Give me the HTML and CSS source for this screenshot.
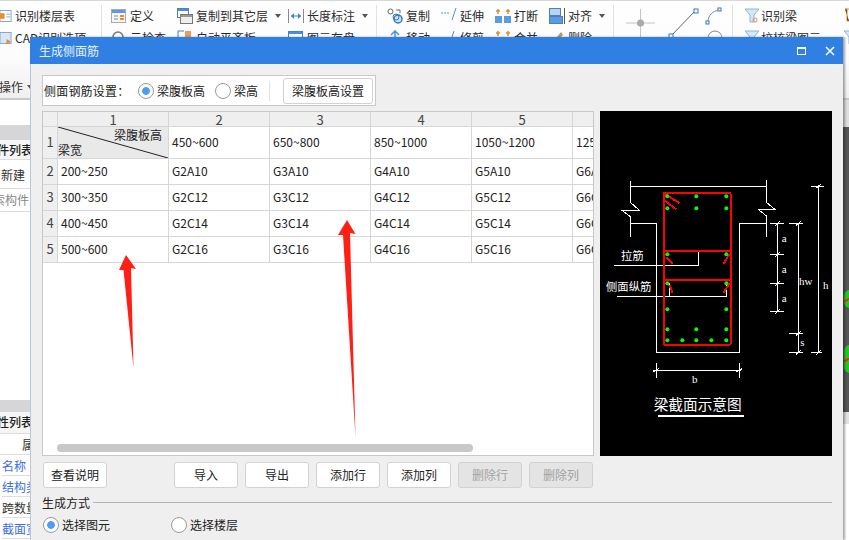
FILE: index.html
```html
<!DOCTYPE html>
<html lang="zh">
<head>
<meta charset="utf-8">
<title>生成侧面筋</title>
<link rel="stylesheet" href="styles.css">
</head>
<body>
<div class="app">
  <header class="ribbon">
    <div class="groups">
      <section class="group g1">
        <div class="tool"><svg class="ic ic-s" viewBox="0 0 13 16"><rect x="0" y="2" width="12" height="12" fill="#fff" stroke="#7aa3d8"/><rect x="0" y="5" width="5" height="6" fill="#ef8a2c"/><path d="M7 6h4M7 9h4" stroke="#7aa3d8"/></svg><span>识别楼层表</span></div>
        <div class="tool"><svg class="ic ic-s" viewBox="0 0 13 16"><rect x="0" y="2" width="12" height="12" fill="#dbe7f5" stroke="#7aa3d8"/><path d="M7 9l5 3-5 3z" fill="#ef8a2c"/></svg><span>CAD识别选项</span></div>
      </section>
      <section class="group g2">
        <div class="tool"><svg class="ic" viewBox="0 0 16 16"><rect x=".5" y="1.5" width="14" height="13" fill="#f6f6f6" stroke="#aaa"/><rect x="1" y="2" width="13" height="3" fill="#5b9be0"/><path d="M3 8h4M3 11h4" stroke="#888"/><path d="M9 8h4M9 11h4" stroke="#ef8a2c" stroke-width="2"/></svg><span>定义</span></div>
        <div class="tool"><svg class="ic" viewBox="0 0 16 16"><rect x=".5" y=".5" width="11" height="9" fill="#fff" stroke="#4a7fc0"/><rect x="1" y="1" width="10" height="2" fill="#4a90e2"/><rect x="3.500" y="6.500" width="12" height="9" fill="#eee" stroke="#777"/><rect x="4" y="7" width="11" height="2" fill="#999"/></svg><span>复制到其它层</span><i class="caret"></i></div>
        <div class="tool"><svg class="ic" viewBox="0 0 16 16"><path d="M.5 1v14M15.500 1v14" stroke="#888"/><path d="M3 8h10" stroke="#3b82d8"/><path d="M3 8l3-3v6zM13 8l-3-3v6z" fill="#3b82d8"/></svg><span>长度标注</span><i class="caret"></i></div>
        <div class="tool"><svg class="ic" viewBox="0 0 16 16"><circle cx="7" cy="7" r="5" fill="none" stroke="#777" stroke-width="1.500"/><path d="M11 11l4 4" stroke="#e58a2c" stroke-width="2"/></svg><span>云检查</span></div>
        <div class="tool"><svg class="ic" viewBox="0 0 16 16"><rect x="8" y="1" width="6" height="6" fill="#ef9a5c"/><path d="M1 1h6M1 1v14" stroke="#4a7fc0"/></svg><span>自动平齐板</span></div>
        <div class="tool"><svg class="ic" viewBox="0 0 16 16"><rect x=".5" y="1.500" width="14" height="13" fill="#fff" stroke="#4a7fc0"/><rect x="1" y="2" width="13" height="2" fill="#4a90e2"/></svg><span>图元存盘</span></div>
      </section>
      <section class="group g3">
        <div class="tool"><svg class="ic" viewBox="0 0 16 16"><circle cx="3.500" cy="3.500" r="2.500" fill="none" stroke="#666"/><circle cx="11" cy="11" r="4" fill="#cfe2f7" stroke="#2f78c8" stroke-width="1.500"/><circle cx="9" cy="9" r="3" fill="none" stroke="#2f78c8"/><path d="M9 2h4v3" fill="none" stroke="#666"/></svg><span>复制</span></div>
        <div class="tool"><svg class="ic" viewBox="0 0 16 16"><path d="M0 5h9" stroke="#4a90e2" stroke-dasharray="2 1"/><path d="M15 0L11 12" stroke="#4a90e2"/></svg><span>延伸</span></div>
        <div class="tool"><svg class="ic" viewBox="0 0 16 16"><rect x="0" y="8" width="7" height="7" fill="#5b9be0"/><rect x="9" y="8" width="7" height="7" fill="#5b9be0"/><path d="M3 1v5M1 3h4M13 1v5M11 3h4" stroke="#e58a2c" stroke-width="1.500"/></svg><span>打断</span></div>
        <div class="tool"><svg class="ic" viewBox="0 0 16 16"><rect x=".5" y=".5" width="11" height="7" fill="#b9d3f2" stroke="#4a7fc0"/><rect x=".5" y="8.500" width="13" height="7" fill="#5b9be0" stroke="#4a7fc0"/><path d="M15.500 0v16" stroke="#555"/></svg><span>对齐</span><i class="caret"></i></div>
        <div class="tool"><svg class="ic" viewBox="0 0 16 16"><path d="M8 1v12M4 5l4-4 4 4" fill="none" stroke="#4a90e2" stroke-width="1.500"/></svg><span>移动</span></div>
        <div class="tool"><svg class="ic" viewBox="0 0 16 16"><path d="M13 1L9 13" stroke="#4a90e2"/></svg><span>修剪</span></div>
        <div class="tool"><svg class="ic" viewBox="0 0 16 16"><path d="M3 1v5M1 3h4M13 1v5M11 3h4" stroke="#e58a2c" stroke-width="1.500"/></svg><span>合并</span></div>
        <div class="tool"><svg class="ic" viewBox="0 0 16 16"><path d="M3 13L12 2l2 3-8 8z" fill="#b59a5c"/></svg><span>删除</span></div>
      </section>
      <section class="group g4">
        <svg class="draw" viewBox="0 0 119 44" width="119" height="44">
          <path d="M12 18h29M26.500 4v29" stroke="#c4c4c4"/>
          <circle cx="26.500" cy="18" r="3.500" fill="#aaa"/>
          <path d="M57 31L81 6" stroke="#666"/>
          <rect x="55" y="29" width="4" height="4" fill="#fff" stroke="#2f78c8"/>
          <rect x="80" y="4" width="4" height="4" fill="#fff" stroke="#2f78c8"/>
          <path d="M94 17C94 10 99 6 105 5" fill="none" stroke="#888"/>
          <rect x="92" y="16" width="3" height="3" fill="#fff" stroke="#2f78c8"/>
          <rect x="104" y="3" width="3" height="3" fill="#fff" stroke="#2f78c8"/>
          <circle cx="101" cy="33" r="7" fill="none" stroke="#888"/>
        </svg>
      </section>
      <section class="group g5">
        <div class="tool"><svg class="ic" viewBox="0 0 16 16"><path d="M1 1h14l-5 6v7H6V7z" fill="#d5e6f5" stroke="#8db5d8"/><circle cx="11" cy="12" r="2" fill="none" stroke="#e58a6c"/></svg><span>识别梁</span></div>
        <div class="tool"><svg class="ic" viewBox="0 0 16 16"><path d="M2 1h2v12h2M2 1h13" stroke="#e58a2c"/></svg></div>
        <div class="tool"><svg class="ic" viewBox="0 0 16 16"><path d="M1 1h14l-5 6v7H6V7z" fill="#d5e6f5" stroke="#8db5d8"/></svg><span>校核梁图元</span></div>
        <div class="tool"><svg class="ic" viewBox="0 0 16 16"><path d="M1 1h14l-5 6v7H6V7z" fill="#d5e6f5" stroke="#8db5d8"/></svg></div>
      </section>
    </div>
    <div class="caption"><span>操作</span><i class="caret"></i></div>
  </header>

  <main class="workspace">
    <aside class="side">
      <div class="spacer-a"></div>
      <div class="band"></div>
      <div class="side-head">件列表</div>
      <div class="side-row tall">新建</div>
      <div class="side-row search">索构件...</div>
      <div class="spacer-b"></div>
      <div class="band short"></div>
      <div class="side-head compact">性列表</div>
      <div class="side-row attr center">属</div>
      <div class="side-row attr link">名称</div>
      <div class="side-row attr link">结构类</div>
      <div class="side-row attr">跨数量</div>
      <div class="side-row attr link">截面宽</div>
    </aside>
    <div class="stage">
      <div class="stage-top"></div>
      <div class="cad">
        <span class="blob one"></span>
        <span class="blob two"></span>
      </div>
      <div class="stage-bottom"></div>
    </div>
  </main>

  <section class="dialog">
    <div class="titlebar">
      <span class="title">生成侧面筋</span>
      <svg class="winbtn" viewBox="0 0 50 12" width="50" height="12">
        <rect x="4.500" y="2.500" width="8" height="7" fill="none" stroke="#fff" stroke-width="1"/>
        <path d="M4 3h9" stroke="#fff" stroke-width="2"/>
        <path d="M33 2l8 8M41 2l-8 8" stroke="#fff" stroke-width="1.500"/>
      </svg>
    </div>
    <div class="dialog-body">
      <div class="settings">
        <span class="settings-label">侧面钢筋设置：</span>
        <label class="radio on first">梁腹板高</label>
        <label class="radio second">梁高</label>
        <span class="vsep"></span>
        <button class="btn wide">梁腹板高设置</button>
      </div>

      <div class="middle">
        <div class="sheet">
          <table class="grid">
            <colgroup>
              <col class="c0"><col class="c1"><col class="cn"><col class="cn"><col class="cn"><col class="cn"><col class="cn">
            </colgroup>
            <tr class="r-head">
              <th class="rowno"></th><th>1</th><th>2</th><th>3</th><th>4</th><th>5</th><th></th>
            </tr>
            <tr class="r-first">
              <th class="rowno">1</th>
              <td class="diag">
                <svg class="diag-line" viewBox="0 0 110 31" preserveAspectRatio="none"><path d="M0 0L110 31" stroke="#222"/></svg>
                <span class="diag-top">梁腹板高</span>
                <span class="diag-bottom">梁宽</span>
              </td>
              <td>450~600</td><td>650~800</td><td>850~1000</td><td>1050~1200</td><td>1250~1400</td>
            </tr>
            <tr><th class="rowno">2</th><td>200~250</td><td>G2A10</td><td>G3A10</td><td>G4A10</td><td>G5A10</td><td>G6A10</td></tr>
            <tr><th class="rowno">3</th><td>300~350</td><td>G2C12</td><td>G3C12</td><td>G4C12</td><td>G5C12</td><td>G6C12</td></tr>
            <tr><th class="rowno">4</th><td>400~450</td><td>G2C14</td><td>G3C14</td><td>G4C14</td><td>G5C14</td><td>G6C14</td></tr>
            <tr><th class="rowno">5</th><td>500~600</td><td>G2C16</td><td>G3C16</td><td>G4C16</td><td>G5C16</td><td>G6C16</td></tr>
          </table>
          <div class="scrollbar"></div>
        </div>

        <svg class="section" viewBox="0 -177 696 1035" width="232" height="345">
          <rect x="0" y="-177" width="696" height="1035" fill="#000"/>
          <g class="wl">
            <path d="M91 48H499M91 33V97L118 121L67 122L91 140V202M499 30V97L526 119L476 119L499 138V202"/>
            <path d="M91 160H169V547H418V160H499"/>
            <path d="M169 580V623M418 580V623M160 601H422M160 606L176 596M410 606L426 596"/>
            <path d="M533 160V424M510 160H552M510 253H552M510 340H552M510 424H552M526 166L540 154M526 259L540 247M526 346L540 334M526 430L540 418"/>
            <path d="M595 160V547M567 160H610M567 490H610M567 547H610M588 166L602 154M588 496L602 484M588 553L602 541"/>
            <path d="M656 48V547M633 48H673M633 547H665M649 54L663 42M649 553L663 541"/>
            <path d="M42 285H295V240M52 378H380V335M208 378V340"/>
          </g>
          <g class="rd">
            <rect x="191" y="69" width="201" height="455" rx="3"/>
            <path d="M191 242H392M191 329H392"/>
            <path d="M195 72L238 99M192 90L228 118M200 262L218 282M388 252L371 282M208 345L218 368M388 340L371 368"/>
          </g>
          <g class="gn">
            <circle cx="202" cy="79" r="6"/><circle cx="289" cy="79" r="6"/><circle cx="379" cy="79" r="6"/>
            <circle cx="202" cy="115" r="6"/><circle cx="289" cy="115" r="6"/><circle cx="379" cy="115" r="6"/>
            <circle cx="202" cy="253" r="6"/><circle cx="379" cy="253" r="6"/>
            <circle cx="202" cy="340" r="6"/><circle cx="379" cy="340" r="6"/>
            <circle cx="202" cy="418" r="6"/><circle cx="379" cy="418" r="6"/>
            <circle cx="202" cy="478" r="6"/><circle cx="289" cy="478" r="6"/><circle cx="379" cy="478" r="6"/>
            <circle cx="202" cy="511" r="6"/><circle cx="247" cy="511" r="6"/><circle cx="289" cy="511" r="6"/><circle cx="334" cy="511" r="6"/><circle cx="379" cy="511" r="6"/>
          </g>
          <text class="cjk" x="63" y="270">拉筋</text>
          <text class="cjk" x="18" y="363">侧面纵筋</text>
          <text class="cjk big" x="161" y="720">梁截面示意图</text>
          <path class="under" d="M174 738H432"/>
          <text class="lat" x="545" y="216">a</text>
          <text class="lat" x="545" y="309">a</text>
          <text class="lat" x="545" y="396">a</text>
          <text class="lat" x="597" y="344">hw</text>
          <text class="lat" x="669" y="358">h</text>
          <text class="lat" x="601" y="528">s</text>
          <text class="lat" x="276" y="640">b</text>
        </svg>
      </div>

      <div class="actions">
        <button class="btn">查看说明</button>
        <div class="actions-right">
          <button class="btn">导入</button>
          <button class="btn">导出</button>
          <button class="btn">添加行</button>
          <button class="btn">添加列</button>
          <button class="btn off">删除行</button>
          <button class="btn off">删除列</button>
        </div>
      </div>

      <div class="legend"><span>生成方式</span><i></i></div>
      <div class="modes">
        <label class="radio on mode-a">选择图元</label>
        <label class="radio">选择楼层</label>
      </div>
    </div>
  </section>

  <svg class="arrows" viewBox="0 0 849 540" width="849" height="540">
    <path d="M126 255L136 269L131 268L133.500 368L123.500 270L119 270Z"/>
    <path d="M347 220L355.500 234L350 233L355.500 437L343 235L338 235Z"/>
  </svg>
</div>
</body>
</html>
```

FILE: styles.css
```css
* { box-sizing: border-box; }
html, body { margin: 0; padding: 0; }
body {
  width: 849px;
  height: 540px;
  overflow: hidden;
  background: #fff;
  color: #333;
  font: 12px/16px "Noto Sans CJK SC", "Noto Sans", sans-serif;
}
.app { position: relative; width: 849px; height: 540px; overflow: hidden; }

/* ribbon */
.ribbon {
  height: 100px;
  padding-top: 4px;
  border-top: 1px solid #d8d8d8;
  border-bottom: 2px solid #c8c8c8;
  background: linear-gradient(#fff, #fbfbfb 60%, #efefef);
  overflow: hidden;
}
.groups { display: flex; height: 75px; }
.group { display: grid; grid-auto-rows: 22px; border-right: 1px solid #e2e2e2; height: 70px; align-content: start; }
.g1 { width: 102px; grid-template-columns: 1fr; }
.g2 { width: 275px; padding-left: 9px; grid-template-columns: 66px 111px 1fr; }
.g3 { width: 237px; padding-left: 10px; grid-template-columns: 54px 54px 54px 1fr; }
.g4 { width: 119px; display: block; }
.g5 { flex: 1; padding-left: 11px; border-right: 0; grid-template-columns: 99px 1fr; }
.tool { display: flex; align-items: center; gap: 3px; white-space: nowrap; overflow: hidden; color: #2b2b2b; }
.ic { width: 16px; height: 16px; flex: none; }
.ic-s { width: 12px; }
.g5 .ic { margin-right: -2px; }
.draw { display: block; }
.caret { width: 0; height: 0; margin-left: 4px; border: 3px solid transparent; border-top: 4px solid #555; border-bottom: 0; }
.caption { display: flex; align-items: center; height: 16px; margin-top: -1px; margin-left: -1px; color: #333; }

/* background workspace */
.workspace { display: grid; grid-template-columns: 30px 1fr; height: 440px; }
.side { overflow: hidden; white-space: nowrap; }
.spacer-a { height: 25px; }
.band { height: 15px; background: #d6d6d9; }
.band.short { height: 12px; }
.spacer-b { height: 188px; }
.side-head { height: 20px; line-height: 20px; margin-left: -3px; border-bottom: 1px solid #ddd; background: #f5f5f5; font-weight: 500; color: #222; }
.side-head.compact { height: 22px; }
.side-row { height: 21px; line-height: 21px; border-bottom: 1px solid #ddd; }
.side-row.tall { height: 29px; line-height: 29px; padding-left: 1px; }
.side-row.search { height: 23px; line-height: 22px; margin-left: -7px; color: #888; }
.side-row.attr { margin-left: 2px; }
.side-row.center { padding-left: 22px; margin-left: 0; }
.side-row.link { color: #3a6ee0; }
.stage { background: #fff; }
.stage-top { height: 27px; background: #dedede; }
.cad { position: relative; height: 285px; background: #555; }
.blob {
  position: absolute;
  left: 814px;
  width: 12px;
  border-radius: 7px;
  background: linear-gradient(155deg, #27c427 44%, #e03020 44% 52%, #27c427 52%);
}
.blob.one { top: 163px; height: 18px; }
.blob.two { top: 218px; height: 28px; }
.stage-bottom { height: 128px; background: linear-gradient(#e2e2e2 12px, #fff 12px); }

/* dialog */
.dialog {
  position: absolute;
  left: 30px;
  top: 37px;
  width: 813px;
  height: 503px;
  border-left: 1px solid #b9c6dc;
  background: #efefef;
  box-shadow: 2px 0 2px rgba(0, 0, 0, .35);
}
.titlebar {
  display: flex;
  align-items: center;
  justify-content: space-between;
  height: 27px;
  margin-left: -1px;
  padding-left: 9px;
  background: #2f80e2;
  color: #e9f1fc;
}
.winbtn { display: block; }
.dialog-body { padding: 11px 11px 0 11px; }

.settings {
  display: flex;
  align-items: center;
  width: 334px;
  height: 31px;
  padding-left: 1px;
  border: 1px solid #c8c8c8;
  background: #fff;
}
.settings-label { width: 94px; color: #222; letter-spacing: .2px; white-space: nowrap; }
.radio { display: inline-flex; align-items: center; gap: 3px; color: #222; white-space: nowrap; }
.radio::before {
  content: "";
  width: 14px;
  height: 14px;
  border: 1px solid #9a9a9a;
  border-radius: 50%;
  background: #fff;
  flex: none;
}
.radio.on::before {
  background: radial-gradient(circle, #4b9df6 0 3.5px, #fff 4.2px);
}
.first { width: 77px; }
.second { width: 54px; }
.vsep { width: 1px; height: 20px; background: #e2e2e2; margin-right: 13px; }

.btn {
  width: 64px;
  height: 26px;
  padding: 0;
  border: 1px solid #d2d2d2;
  border-radius: 3px;
  background: #fff;
  color: #222;
  font: inherit;
}
.btn.wide { width: 90px; }
.btn.off { background: #e4e4e4; color: #a2a2a2; }

.middle { display: flex; gap: 6px; margin-top: 5px; height: 345px; }
.sheet {
  position: relative;
  width: 552px;
  height: 345px;
  overflow: hidden;
  border: 1px solid #c8c8c8;
  background: #fff;
}
.grid { width: 631px; table-layout: fixed; border-collapse: separate; border-spacing: 0; }
.c0 { width: 15px; }
.c1 { width: 111px; }
.cn { width: 101px; }
.grid th, .grid td {
  height: 26px;
  padding: 0 0 2px 3px;
  border-right: 1px solid #d6d6d6;
  border-bottom: 1px solid #d6d6d6;
  font-weight: 400;
  text-align: left;
  white-space: nowrap;
  overflow: hidden;
  color: #222;
}
.grid th { padding: 0 0 1px; text-align: center; background: #efefef; color: #444; font-size: 13px; }
.r-head th { height: 15px; line-height: 13px; padding: 0; }
.r-first th, .r-first td { height: 32px; }
.diag { position: relative; padding: 0 !important; background: #e9e9e9; }
.diag-line { position: absolute; inset: 0; width: 100%; height: 100%; }
.diag-top { position: absolute; right: 6px; top: 0; }
.diag-bottom { position: absolute; left: 0; bottom: 0; }
.scrollbar {
  position: absolute;
  left: 14px;
  top: 332px;
  width: 416px;
  height: 8px;
  border-radius: 4px;
  background: #c8c8c8;
}

.section { display: block; flex: none; }
.wl path { fill: none; stroke: #fff; stroke-width: 3; shape-rendering: crispEdges; }
.rd rect, .rd path { fill: none; stroke: #f00; stroke-width: 6; shape-rendering: crispEdges; }
.gn circle { fill: #0f0; }
.cjk { fill: #fff; font-size: 34px; font-family: "Noto Sans CJK SC", sans-serif; }
.cjk.big { font-size: 44px; }
.lat { fill: #fff; font-size: 33px; font-family: "Liberation Serif", serif; }
.under { fill: none; stroke: #fff; stroke-width: 6; }

.actions { display: flex; justify-content: space-between; width: 552px; margin-top: 6px; padding: 0 1px; }
.actions-right { display: flex; gap: 7px; }

.legend { display: flex; align-items: center; gap: 3px; height: 16px; margin-top: 7px; color: #222; }
.legend i { flex: 1; height: 1px; background: #b5b5b5; margin-top: -2px; }
.modes { display: flex; margin-top: 4px; height: 20px; padding-left: 1px; }
.mode-a { width: 128px; }

.arrows { position: absolute; left: 0; top: 0; pointer-events: none; }
.arrows path { fill: #ff2015; }
```
